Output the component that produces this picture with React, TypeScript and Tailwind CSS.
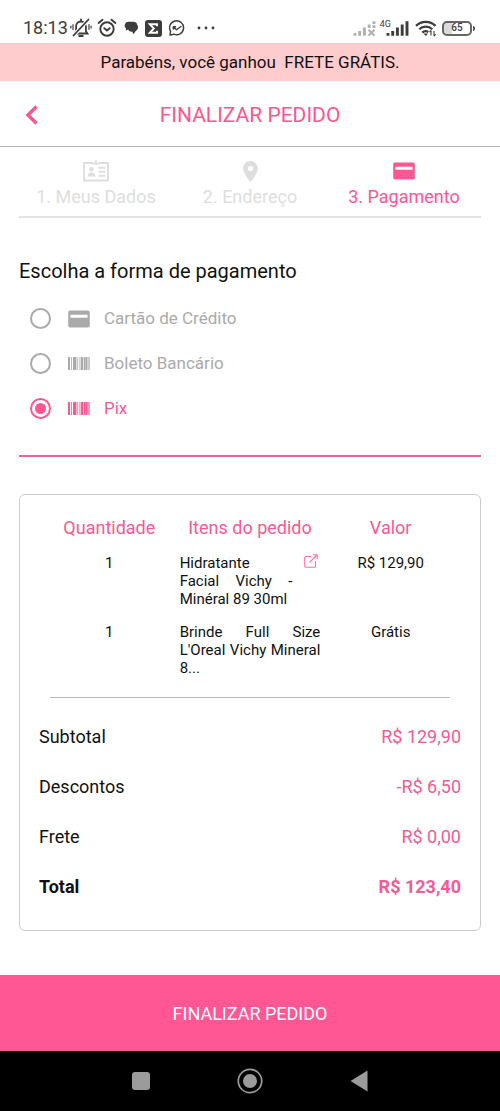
import { useState } from "react";
import type { ReactNode } from "react";
import { MdLocationOn } from "react-icons/md";

type Method = "cartao" | "boleto" | "pix";

function CardIcon() {
  return (
    <svg viewBox="0 0 22 18" className="h-[18px] w-[22px]" fill="currentColor" aria-hidden="true">
      <path
        fillRule="evenodd"
        d="M2 .5h18a1.8 1.8 0 0 1 1.8 1.8v13.4a1.8 1.8 0 0 1-1.8 1.8H2A1.8 1.8 0 0 1 .2 15.7V2.3A1.8 1.8 0 0 1 2 .5ZM2.4 4.7v3h17.2v-3Z"
      />
    </svg>
  );
}

const bars = [
  [0, 2, 1],
  [3, 1, 0.8],
  [5, 3.4, 1],
  [9, 0.9, 0.7],
  [10.8, 0.9, 0.7],
  [12.6, 2.4, 1],
  [15.7, 1.3, 1],
  [17.3, 2.2, 1],
  [20.4, 1.2, 1],
];

function BarcodeIcon() {
  return (
    <svg viewBox="0 0 22 13" className="h-[13px] w-[22px]" fill="currentColor" aria-hidden="true">
      {bars.map(([x, w, o]) => (
        <rect key={x} x={x} y="0" width={w} height="13" opacity={o} />
      ))}
    </svg>
  );
}

function IdCardIcon() {
  return (
    <svg viewBox="0 0 26 22" className="h-[22px] w-[26px]" fill="none" stroke="currentColor" aria-hidden="true">
      <path strokeWidth="1.9" strokeLinejoin="round" d="M10.5 3H1v17.5h24V3h-9.5" />
      <path strokeWidth="1.8" d="M13 .3v4.2M9.8 3.7h6.4" />
      <path strokeWidth="1.9" d="M15.5 7.7H22M15.5 11.7H22M15.5 15.7H22" />
      <circle cx="8.5" cy="9.3" r="2.3" fill="currentColor" stroke="none" />
      <path fill="currentColor" stroke="none" d="M4.5 16.5c0-2.9 1.7-4 4-4s4 1.1 4 4z" />
    </svg>
  );
}

function ExternalIcon() {
  return (
    <svg viewBox="0 0 14 14" className="h-[14px] w-[14px]" fill="none" stroke="currentColor" strokeWidth="1.1" aria-hidden="true">
      <path d="M7 2.5H2A1.3 1.3 0 0 0 .7 3.8V12A1.3 1.3 0 0 0 2 13.3h8.2a1.3 1.3 0 0 0 1.3-1.3V7M5.5 8.5 13 1M9 .8h4.2V5" />
    </svg>
  );
}

function SignalIcon({ lost = false }: { lost?: boolean }) {
  return (
    <svg viewBox="0 0 23 15" className="h-[15px] w-[23px]" fill="none" stroke="currentColor" strokeWidth="2.9" aria-hidden="true">
      {lost ? (
        <>
          <path d="M2 12v2.7M6.7 10v4.7M11.4 6.5v8.2M16.2 3.5V7M21 .3V3M21 4.3V7" />
          <path strokeWidth="2" d="m15.5 8.7 6 6M21.5 8.7l-6 6" />
        </>
      ) : (
        <path d="M2 12v2.7M6.7 10v4.7M11.4 6.5v8.2M16.2 3.5v11.2M21 .3v14.4" />
      )}
    </svg>
  );
}

function StatusBar() {
  return (
    <div className="flex h-[43px] items-center justify-between pt-[13px] pr-[25px] pl-[23px] text-[#3c3c3c]">
      <div className="flex items-center">
        <span className="text-[18px] leading-5">18:13</span>
        <svg viewBox="0 0 22 20" className="ml-[2px] h-5 w-[22px]" fill="none" stroke="currentColor" strokeWidth="1.8" strokeLinecap="round" aria-hidden="true">
          <path d="M4.5 15.500h13l-1.600-2.300V8.500a5 5 0 0 0-5-5 4.800 4.800 0 0 0-4.800 5v4.700l-1.600 2.300ZM11 1.500v2M9.200 18h3.600" />
          <path stroke="white" strokeWidth="4" d="m18.500 1.500-15 16" />
          <path d="m18.500 1.500-15 16" />
          <path strokeWidth="1.2" d="M3 6.500v5M.9 8v2M19 6.500v5M21.100 8v2" />
        </svg>
        <svg viewBox="0 0 20 20" className="ml-[5px] h-5 w-5" fill="none" stroke="currentColor" strokeWidth="1.9" strokeLinecap="round" aria-hidden="true">
          <circle cx="10" cy="11" r="6.7" />
          <path d="M1.600 5 5.500 1.700M18.400 5l-3.900-3.300M7.300 10.300 10 12.500l2.700-2.200" />
        </svg>
        <svg viewBox="0 0 14 14" className="ml-[7px] h-[14px] w-[14px]" fill="currentColor" aria-hidden="true">
          <path d="M4.500.8h4.800a4 4 0 0 1 4 3.200 4.200 4.200 0 0 1-1.800 6.200 5 5 0 0 1-2.800 3.100c.3-.9.2-1.900-.2-2.500A4.500 4.500 0 0 1 4 8.500L1.800 9.800 2 7.300A3.700 3.700 0 0 1 4.500.8Z" />
        </svg>
        <svg viewBox="0 0 17 17" className="ml-[7px] h-[17px] w-[17px]" aria-hidden="true">
          <rect width="17" height="17" rx="3" fill="currentColor" />
          <path d="M12 6.200V4.200H4.800L8.800 8.500l-4 4.300H12v-2" fill="none" stroke="white" strokeWidth="1.9" />
        </svg>
        <svg viewBox="0 0 16 16" className="ml-[7px] h-4 w-4" fill="none" stroke="currentColor" strokeWidth="1.4" strokeLinecap="round" strokeLinejoin="round" aria-hidden="true">
          <path d="m1 15 .6-3.600A7 7 0 1 1 4.800 14.200L1 15Z" />
          <path d="M4.300 9V6.700h2.200M4.500 7l3 2.800L12 6.500" />
        </svg>
        <svg viewBox="0 0 18 4" className="ml-3 h-1 w-[18px]" fill="currentColor" aria-hidden="true">
          <circle cx="2" cy="2" r="1.4" />
          <circle cx="9" cy="2" r="1.4" />
          <circle cx="16" cy="2" r="1.4" />
        </svg>
      </div>
      <div className="flex items-center">
        <span className="text-[#b0b0b0]">
          <SignalIcon lost />
        </span>
        <span className="ml-1 self-start text-[9px] leading-[10px]">4G</span>
        <span className="-ml-[5px]">
          <SignalIcon />
        </span>
        <svg viewBox="0 0 22 18" className="ml-[6px] h-[18px] w-[22px]" fill="none" stroke="currentColor" strokeWidth="2.3" aria-hidden="true">
          <path d="M1 6.800a14 14 0 0 1 19.500 0M4.300 10.300a9.300 9.300 0 0 1 13 0M7.300 13.600a5 5 0 0 1 6-.7" />
          <path fill="currentColor" stroke="none" d="m8.500 14.500 2.300 2.600 2.200-2.600z" />
          <path strokeWidth="1.1" d="M16 11.500v5M14.500 13l1.500-1.600M19 12v5M20.700 15.300 19 17" />
        </svg>
        <span className="ml-[5px] flex h-[15px] w-[30px] items-center justify-center rounded-[5px] border-2 border-[#666] bg-linear-to-r from-[#dcdcdc] from-35% to-white to-35% bg-origin-border text-[10px] leading-[10px] font-medium">
          65
        </span>
        <span className="ml-px h-[5px] w-[2px] rounded-r bg-[#555]" />
      </div>
    </div>
  );
}

function Step({ icon, label, active = false }: { icon: ReactNode; label: string; active?: boolean }) {
  return (
    <li
      aria-current={active ? "step" : undefined}
      className={`flex flex-1 flex-col items-center ${active ? "text-[#ff5694]" : "text-[#dedede]"}`}
    >
      <span className="flex h-6 items-center">{icon}</span>
      <span className="mt-[2px] text-[18px] leading-6">{label}</span>
    </li>
  );
}

function SummaryRow({ label, value, strong = false }: { label: string; value: string; strong?: boolean }) {
  return (
    <div className={`flex h-[50px] items-center justify-between text-[18px] ${strong ? "font-bold" : ""}`}>
      <dt>{label}</dt>
      <dd className="text-[#f45a93]">{value}</dd>
    </div>
  );
}

const methods: { id: Method; label: string; icon: ReactNode }[] = [
  { id: "cartao", label: "Cartão de Crédito", icon: <CardIcon /> },
  { id: "boleto", label: "Boleto Bancário", icon: <BarcodeIcon /> },
  { id: "pix", label: "Pix", icon: <BarcodeIcon /> },
];

export default function App() {
  const [method, setMethod] = useState<Method>("pix");

  return (
    <div className="flex min-h-screen flex-col bg-white font-[Roboto,sans-serif] text-[#111]">
      <StatusBar />
      <p className="bg-[#ffcccd] py-[7px] text-center text-[17px] leading-6 whitespace-pre-wrap">
        {"Parabéns, você ganhou  FRETE GRÁTIS."}
      </p>
      <header className="grid h-[66px] grid-cols-[64px_1fr_64px] items-center border-b border-[#b5b5b5] pt-[2px] text-[#f9588f]">
        <button type="button" aria-label="Voltar" className="flex h-full items-center pl-6">
          <svg viewBox="0 0 14 20" className="h-5 w-[14px]" fill="none" stroke="currentColor" strokeWidth="3.4" aria-hidden="true">
            <path d="M12.500 1.500 4 10l8.500 8.500" />
          </svg>
        </button>
        <h1 className="text-center text-[21px] leading-7">FINALIZAR PEDIDO</h1>
      </header>

      <main className="px-[19px]">
        <ol className="flex border-b-2 border-[#e3e3e3] pt-3 pb-[7px]">
          <Step icon={<IdCardIcon />} label="1. Meus Dados" />
          <Step icon={<MdLocationOn className="size-[25px]" />} label="2. Endereço" />
          <Step icon={<CardIcon />} label="3. Pagamento" active />
        </ol>

        <fieldset className="border-b-2 border-[#f0609a] pb-6">
          <legend className="pt-[39px] pb-[11px] text-[20px] leading-7">Escolha a forma de pagamento</legend>
          {methods.map(({ id, label, icon }) => (
            <label
              key={id}
              className={`flex h-[45px] items-center pl-[11px] text-[17px] ${method === id ? "text-[#ff5694]" : "text-[#aaa]"}`}
            >
              <input
                type="radio"
                name="pagamento"
                value={id}
                checked={method === id}
                onChange={() => setMethod(id)}
                className="size-[21px] appearance-none rounded-full border-2 border-current bg-clip-content p-[3px] checked:bg-[#ff5694]"
              />
              <span className="mr-[14px] ml-[17px]">{icon}</span>
              {label}
            </label>
          ))}
        </fieldset>

        <section className="mt-[37px] rounded-[6px] border border-[#ccc] px-[19px] pt-[21px] pb-[19px]">
          <table className="w-full table-fixed text-[15px] leading-[18px]">
            <thead>
              <tr className="text-[18px] leading-[23px] text-[#f45a93]">
                <th className="p-0 font-normal">Quantidade</th>
                <th className="p-0 font-normal">Itens do pedido</th>
                <th className="p-0 font-normal">Valor</th>
              </tr>
            </thead>
            <tbody className="align-top">
              <tr>
                <td className="px-0 pt-[15px] pb-0 text-center">1</td>
                <td className="px-0 pt-[15px] pb-0 text-justify">
                  <a href="#produto" aria-label="Ver produto" className="float-right flex h-5 w-7 justify-end pr-[2px] text-[#ff6fa3]">
                    <ExternalIcon />
                  </a>
                  Hidratante Facial Vichy - Minéral 89 30ml
                </td>
                <td className="px-0 pt-[15px] pb-0 text-center">R$ 129,90</td>
              </tr>
              <tr>
                <td className="px-0 pt-[15px] pb-0 text-center">1</td>
                <td className="px-0 pt-[15px] pb-0 text-justify">Brinde Full Size L'Oreal Vichy Mineral 8...</td>
                <td className="px-0 pt-[15px] pb-0 text-center">Grátis</td>
              </tr>
            </tbody>
          </table>
          <hr className="mx-[11px] mt-5 mb-[13px] border-[#bbb]" />
          <dl>
            <SummaryRow label="Subtotal" value="R$ 129,90" />
            <SummaryRow label="Descontos" value="-R$ 6,50" />
            <SummaryRow label="Frete" value="R$ 0,00" />
            <SummaryRow label="Total" value="R$ 123,40" strong />
          </dl>
        </section>
      </main>

      <footer className="mt-auto pt-11">
        <button type="button" className="block h-[76px] w-full bg-[#ff5694] text-[18px] text-white">
          FINALIZAR PEDIDO
        </button>
        <nav aria-label="Sistema" className="flex h-[60px] justify-center bg-black text-[#9b9b9b]">
          <button type="button" aria-label="Recentes" className="flex w-[109px] items-center justify-center">
            <span className="size-[18px] rounded-[3px] bg-current" />
          </button>
          <button type="button" aria-label="Início" className="flex w-[109px] items-center justify-center">
            <svg viewBox="0 0 26 26" className="size-[26px]" fill="currentColor" aria-hidden="true">
              <circle cx="13" cy="13" r="11.7" fill="none" stroke="currentColor" strokeWidth="1.7" />
              <circle cx="13" cy="13" r="7" />
            </svg>
          </button>
          <button type="button" aria-label="Voltar ao anterior" className="flex w-[109px] items-center justify-center">
            <svg viewBox="0 0 18 22" className="h-[22px] w-[18px]" fill="currentColor" aria-hidden="true">
              <path d="M.5 11 17.500.5v21z" />
            </svg>
          </button>
        </nav>
      </footer>
    </div>
  );
}
